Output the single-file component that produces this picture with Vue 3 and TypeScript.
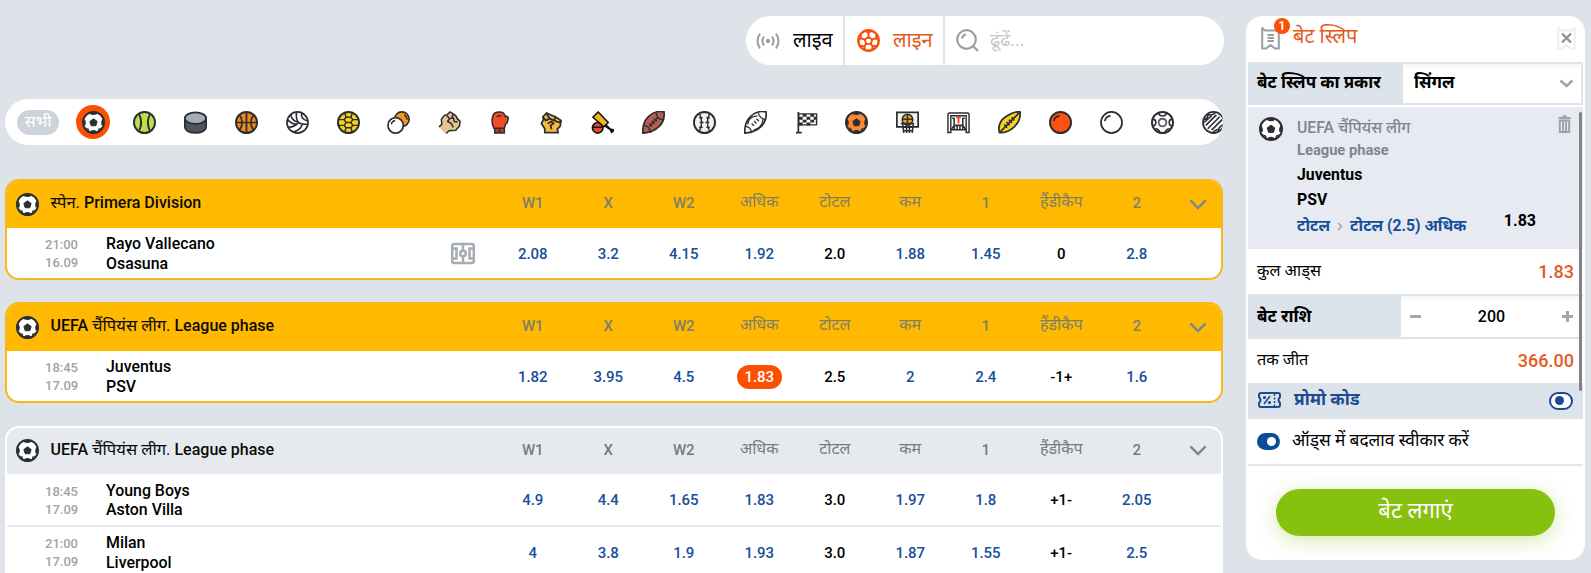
<script setup lang="ts">
interface Match {
  time: string
  date: string
  home: string
  away: string
  odds: string[]
  field?: boolean
  picked?: number
}
interface League {
  pre: string
  hi: string
  post: string
  gold: boolean
  matches: Match[]
}

const sports: string[] = [
  'tennis', 'puck', 'basket', 'volley', 'futsal', 'pingpong', 'fist', 'boxing', 'mma', 'cricket',
  'amfoot', 'baseball', 'rugby', 'flag', 'beach', 'hoop', 'goal', 'aussie', 'redball', 'whiteball', 'soccer2', 'hatch',
]
const columns: string[] = ['W1', 'X', 'W2', 'अधिक', 'टोटल', 'कम', '1', 'हैंडीकैप', '2']
const leagues: League[] = [
  {
    pre: '', hi: 'स्पेन.', post: ' Primera Division', gold: true,
    matches: [
      { time: '21:00', date: '16.09', home: 'Rayo Vallecano', away: 'Osasuna', field: true, odds: ['2.08', '3.2', '4.15', '1.92', '2.0', '1.88', '1.45', '0', '2.8'] },
    ],
  },
  {
    pre: 'UEFA ', hi: 'चैंपियंस लीग.', post: ' League phase', gold: true,
    matches: [
      { time: '18:45', date: '17.09', home: 'Juventus', away: 'PSV', picked: 3, odds: ['1.82', '3.95', '4.5', '1.83', '2.5', '2', '2.4', '-1+', '1.6'] },
    ],
  },
  {
    pre: 'UEFA ', hi: 'चैंपियंस लीग.', post: ' League phase', gold: false,
    matches: [
      { time: '18:45', date: '17.09', home: 'Young Boys', away: 'Aston Villa', odds: ['4.9', '4.4', '1.65', '1.83', '3.0', '1.97', '1.8', '+1-', '2.05'] },
      { time: '21:00', date: '17.09', home: 'Milan', away: 'Liverpool', odds: ['4', '3.8', '1.9', '1.93', '3.0', '1.87', '1.55', '+1-', '2.5'] },
    ],
  },
]
const isLatin = (s: string): boolean => /^[\x20-\x7e]+$/.test(s)
</script>

<template>
  <div class="page">
    <svg class="defs" width="0" height="0" aria-hidden="true">
      <symbol id="football" viewBox="0 0 24 24">
        <circle cx="12" cy="12" r="11" fill="#fff" stroke="#2b2e33" stroke-width="2" />
        <path d="M12 8.200l3.800 2.700-1.400 4.500H9.600l-1.400-4.500z" fill="#2b2e33" stroke="#2b2e33" stroke-linejoin="round" />
        <path d="M7 1.500Q8.500 4.200 12 4.200t5-2.700zM23 7Q18.800 10 20.500 15l2.500 0zM1 7Q5.200 10 3.500 15l-2.500 0zM8 22.800Q8.500 19.800 12 19.800t4 3zM3 17l4 1.500L8 22zM21 17l-4 1.500L16 22z" fill="#2b2e33" />
      </symbol>
      <symbol id="tennis" viewBox="0 0 24 24">
        <circle cx="12" cy="12" r="11" fill="#bede4a" stroke="#2b2e33" stroke-width="2" />
        <path d="M6 2.500Q11 12 6 21.500M18 2.500Q13 12 18 21.500" fill="none" stroke="#2b2e33" stroke-width="2" />
      </symbol>
      <symbol id="puck" viewBox="0 0 24 24">
        <path d="M.9 7.500v9C.9 25 23.100 25 23.100 16.500v-9z" fill="#4d555d" stroke="#2b2e33" stroke-width="1.800" />
        <ellipse cx="12" cy="7.500" rx="11.100" ry="6" fill="#a4adb7" stroke="#2b2e33" stroke-width="1.800" />
      </symbol>
      <symbol id="basket" viewBox="0 0 24 24">
        <circle cx="12" cy="12" r="11" fill="#ee871c" stroke="#2b2e33" stroke-width="2" />
        <path d="M12 1v22M1 12h22M4.500 4q6 8 0 16M19.500 4q-6 8 0 16" fill="none" stroke="#2b2e33" stroke-width="1.800" />
      </symbol>
      <symbol id="volley" viewBox="0 0 24 24">
        <circle cx="12" cy="12" r="11" fill="#fff" stroke="#2b2e33" stroke-width="1.800" />
        <path d="M11 1.500Q10 8 13 12q4 2.500 9.500 1.500M5 4q1 5.500 6.500 7.500M16.500 2q-2 6 6 8.500M13 12q-3 4.500-10.500 5M17 14q-2 6-10 8M1.500 9q4 4.500 9.500 5" fill="none" stroke="#2b2e33" stroke-width="1.700" />
      </symbol>
      <symbol id="futsal" viewBox="0 0 24 24">
        <circle cx="12" cy="12" r="11" fill="#f9d21b" stroke="#2b2e33" stroke-width="2" />
        <path d="M9.500 6.500h5L16.500 9l-2 3 2 3-2 2.500h-5L7.500 15l2-3-2-3zM9.500 12h5M9.500 6.500L8 2M14.500 6.500L16 2M9.500 17.500L8 22M14.500 17.500L16 22M1.500 9h6M16.500 9h6M1.500 15h6M16.500 15h6" fill="none" stroke="#2b2e33" stroke-width="1.500" />
      </symbol>
      <symbol id="pingpong" viewBox="0 0 24 24">
        <circle cx="15.500" cy="8.500" r="7.600" fill="#f59a1c" stroke="#2b2e33" stroke-width="1.800" />
        <path d="M18 4q3 2 3 5" fill="none" stroke="#2b2e33" stroke-width="1.500" />
        <circle cx="9" cy="15" r="8" fill="#fff" stroke="#2b2e33" stroke-width="1.800" />
        <path d="M4.500 14q.5-3.500 4-4" fill="none" stroke="#2b2e33" stroke-width="1.500" />
      </symbol>
      <symbol id="fist" viewBox="0 0 24 24">
        <path d="M1.500 17L4 13l-.3-5Q6 3.500 10 3l3-2 3 1.500 3 2L22 8l1 5-4 6-8 1-4 3.500z" fill="#e6c491" />
        <path d="M1 16.500L4 14 3.500 9Q6 4 9.500 4l3-3L16 3l2.500 2 2 3.500 2.500 2-.5 5-4 4.500-7 .5-3 3M9.500 5l2.500 3 4-1 1 4 3.500.5M16 3l-1.500 3.500M12 8l-2 3 4 2 2 4" fill="none" stroke="#2b2e33" stroke-width="1.600" />
      </symbol>
      <symbol id="boxing" viewBox="0 0 24 24">
        <path d="M6 17h10v6H6z" fill="#b5401d" stroke="#2b2e33" stroke-width="1.600" />
        <path d="M5 18Q2 12 4 5q1-4 7-4 5 0 6 5 3.500-1.500 3 2.500-.5 4-3 6l-1 3.500z" fill="#f14b23" stroke="#2b2e33" stroke-width="1.600" />
        <path d="M8 6q3-2 5-.5M11 19v4" fill="none" stroke="#2b2e33" stroke-width="1.500" />
      </symbol>
      <symbol id="mma" viewBox="0 0 24 24">
        <path d="M5 22.500v-4L1.500 13l2-4L3 6l4-4 4 2 5 2 6 4-1 6-3 3 1 3.500z" fill="#f9b93a" stroke="#2b2e33" stroke-width="1.800" stroke-linejoin="round" />
        <path d="M3 6l3 4 4-2-3-5M10 8l5 2 1-4M15 10l5 2 2-2M8 13l4-2 2 2-3 2 1 4" fill="none" stroke="#2b2e33" stroke-width="1.900" />
      </symbol>
      <symbol id="cricket" viewBox="0 0 24 24">
        <path d="M14 12l6.500 6 3.500 1v2.500l-3 2-1.500-3.500-7-5z" fill="#111" />
        <circle cx="7" cy="17.500" r="5.500" fill="#e54b20" stroke="#111" stroke-width="1.800" />
        <path d="M7.500 1L18 12l-4.500 4.500L2 6.500z" fill="#f2b41b" stroke="#111" stroke-width="1.600" />
        <path d="M1.500 17h11" fill="none" stroke="#111" stroke-width="1.700" />
      </symbol>
      <symbol id="amfoot" viewBox="0 0 24 24">
        <path d="M1 23Q0 12 7 5.500T23 1q1 9-5 15T1 23z" fill="#b85c50" stroke="#2b2e33" stroke-width="1.800" />
        <path d="M1 15q7 0 8 8M15 2q0 7 8 7M8 16l8-9M7.500 13l3 3M10 10.500l3 3M12.500 8l3 3" fill="none" stroke="#2b2e33" stroke-width="1.400" />
      </symbol>
      <symbol id="baseball" viewBox="0 0 24 24">
        <circle cx="12" cy="12" r="11" fill="#f5f1e8" stroke="#2b2e33" stroke-width="2" />
        <path d="M6.500 2.500q5 9.500 0 19M17.500 2.500q-5 9.500 0 19M6.500 7h3.500M7 12h4M6.500 17h3.500M14 7h3.500M13 12h4M14 17h3.500" fill="none" stroke="#2b2e33" stroke-width="1.500" />
      </symbol>
      <symbol id="rugby" viewBox="0 0 24 24">
        <path d="M1 23Q0 12 7 5.500T23 1q1 9-5 15T1 23z" fill="#fff" stroke="#2b2e33" stroke-width="1.800" />
        <path d="M1 16q6 0 7 7M15 2q1 6 8 7M10 20q9-2 10-12M4 14Q4 6 14 5" fill="none" stroke="#2b2e33" stroke-width="1.300" />
        <path d="M8 13l2.500 2.500M10.500 10.500l2.500 2.500M13 8l2.500 2.500" fill="none" stroke="#2b2e33" stroke-width="1.400" />
      </symbol>
      <symbol id="flag" viewBox="0 0 24 24">
        <path d="M3.500 1v22M1 22.500h6" stroke="#2b2e33" stroke-width="1.800" fill="none" />
        <path d="M4 3h18.500v11.500H4z" fill="#fff" stroke="#2b2e33" stroke-width="1.500" />
        <path d="M8 3h4v3H8zM16 3h4v3h-4zM4 6h4v3H4zM12 6h4v3h-4zM19.500 6h3v3h-3zM8 9h4v3H8zM16 9h4v3h-4zM4 12h4v3H4zM12 12h4v3h-4z" fill="#2b2e33" />
      </symbol>
      <symbol id="beach" viewBox="0 0 24 24">
        <circle cx="12" cy="12" r="11" fill="#f98834" stroke="#2b2e33" stroke-width="2" />
        <path d="M12 8.200l3.800 2.700-1.400 4.500H9.600l-1.400-4.500z" fill="#2b2e33" stroke="#2b2e33" stroke-linejoin="round" />
        <path d="M7 1.500Q8.500 4.200 12 4.200t5-2.700zM23 7Q18.800 10 20.500 15l2.500 0zM1 7Q5.200 10 3.500 15l-2.500 0zM8 22.800Q8.500 19.800 12 19.800t4 3zM3 17l4 1.500L8 22zM21 17l-4 1.500L16 22z" fill="#2b2e33" />
      </symbol>
      <symbol id="hoop" viewBox="0 0 24 24">
        <path d="M.9 1.500h22.200v15H.9z" fill="#f3f3f1" stroke="#2b2e33" stroke-width="1.800" />
        <circle cx="12" cy="9" r="5.500" fill="#f0a320" stroke="#2b2e33" stroke-width="1.600" />
        <path d="M12 3.500V12M6.500 8.500h11M5 13h14M7 13l1 10M11 13v10M14 13v10M18 13l-1 10M7 17h11M8 20.500h9" fill="none" stroke="#2b2e33" stroke-width="1.600" />
      </symbol>
      <symbol id="goal" viewBox="0 0 24 24">
        <path d="M1 22.500V3.500Q1 2 2.500 2h19Q23 2 23 3.500v19h-3V5H4v17.500z" fill="#fff" stroke="#2b2e33" stroke-width="1.500" />
        <path d="M7.500 7v12M16.500 7v12M7.500 15h9M4 20l3.500-5M20 20l-3.500-5M10.500 15v4M13.500 15v4M4 19.500h16M5.500 7.500h2M16.500 7.500h2" fill="none" stroke="#2b2e33" stroke-width="1.600" />
        <path d="M9.500 6.500h5M12 6.500v6.500" stroke="#e8442c" stroke-width="2" />
      </symbol>
      <symbol id="aussie" viewBox="0 0 24 24">
        <path d="M1.500 22.500Q-1 12 8 6T23 1q1 9-6 15.500T1.500 22.500z" fill="#f9d21b" stroke="#2b2e33" stroke-width="1.800" />
        <path d="M1.500 22.500L23 1M6.500 14l3 3.500M9 11.500l3 3.500M11.500 9l3 3.500M14 6.500l3 3.500" fill="none" stroke="#2b2e33" stroke-width="1.700" />
      </symbol>
      <symbol id="redball" viewBox="0 0 24 24">
        <circle cx="12" cy="12" r="11" fill="#fb5210" stroke="#2b2e33" stroke-width="2" />
        <path d="M5 10.500Q6 5.500 11 5" fill="none" stroke="#2b2e33" stroke-width="1.800" />
      </symbol>
      <symbol id="whiteball" viewBox="0 0 24 24">
        <circle cx="12" cy="12" r="11" fill="#fff" stroke="#2b2e33" stroke-width="1.800" />
        <path d="M5 10.500Q6 5.500 11 5" fill="none" stroke="#2b2e33" stroke-width="1.800" />
      </symbol>
      <symbol id="soccer2" viewBox="0 0 24 24">
        <circle cx="12" cy="12" r="11" fill="#fff" stroke="#2b2e33" stroke-width="2" />
        <circle cx="12" cy="12" r="4" fill="none" stroke="#5a6168" stroke-width="2" />
        <path d="M8 1.500q0 3.500 4 3.500t4-3.500M22.500 8.500q-3.500 0-3.500 3.500t3.500 3.500M1.500 8.500Q5 8.500 5 12t-3.500 3.500M9 22.500q-.5-4-4.500-4M15 22.500q.5-4 4.500-4" fill="none" stroke="#2b2e33" stroke-width="1.700" />
      </symbol>
      <symbol id="hatch" viewBox="0 0 24 24">
        <circle cx="12" cy="12" r="11" fill="#fff" stroke="#2b2e33" stroke-width="1.800" />
        <path d="M6 3q1 5-4.500 6M6 3q4 3 8-1.500M18 21q-2-4-7 2M18 21q-2-4 5-7M4 15L15 4M6 18.500L18.500 6M10 20L21 9M2 12l8-7" fill="none" stroke="#2b2e33" stroke-width="1.700" />
      </symbol>
    </svg>

    <main class="board">
      <nav class="modes">
        <div class="mode live">
          <svg width="24" height="18" viewBox="0 0 24 18" fill="none" stroke="#9b9ea3" stroke-width="2">
            <circle cx="12" cy="9" r="2.200" fill="#9b9ea3" stroke="none" />
            <path d="M8 4.500q-3 4.500 0 9M4 1.500q-5 7.500 0 15M16 4.500q3 4.500 0 9M20 1.500q5 7.500 0 15" />
          </svg>
          <span>लाइव</span>
        </div>
        <div class="mode line">
          <svg width="23" height="23" viewBox="0 0 24 24" fill="none" stroke="#f4510b" stroke-width="2">
            <circle cx="12" cy="12" r="10.700" fill="#fff" stroke-width="2.400" />
            <path d="M12 8.300l3.800 2.700-1.400 4.500H9.600L8.200 11z" />
            <path d="M12 8.300V5M15.800 11l4.200-1.200M14.400 15.500l2 2.700M9.600 15.500l-2 2.700M8.200 11L4 9.800M16.400 18.200l4-.7M7.600 18.200l-4-.7M16.400 18.200l-.9 3.800M7.600 18.200l.9 3.800M4 9.800L1.500 12M20 9.800l2.500 2.200M4 9.800V6M20 9.800V6" />
            <path d="M8 1.800h8L12 5.800z" fill="#f4510b" stroke="none" />
          </svg>
          <span>लाइन</span>
        </div>
        <div class="mode search">
          <svg width="23" height="23" viewBox="0 0 23 23" fill="none" stroke="#9b9ea3" stroke-width="2.200">
            <circle cx="10.500" cy="10.500" r="9.300" />
            <path d="M17 17l5 5M6 9.500q.5-3.500 4-4" />
          </svg>
          <span>ढूंढें...</span>
        </div>
      </nav>

      <div class="sports">
        <span class="all"><span>सभी</span></span>
        <span class="active"><svg width="23" height="23"><use href="#football" /></svg></span>
        <span v-for="s in sports" :key="s" class="sport"><svg width="23" height="23"><use :href="'#' + s" /></svg></span>
      </div>

      <section v-for="(l, i) in leagues" :key="i" class="league" :class="{ gold: l.gold }">
        <header class="grid head">
          <svg class="ball" width="23" height="23"><use href="#football" /></svg>
          <span class="title">{{ l.pre }}<i>{{ l.hi }}</i>{{ l.post }}</span>
          <span v-for="c in columns" :key="c" class="cell" :class="{ latin: isLatin(c) }">{{ c }}</span>
          <svg class="chev" width="18" height="11" viewBox="0 0 19 11" fill="none" stroke-width="2.600"><path d="M1.500 1.200l8 8 8-8" /></svg>
        </header>
        <div v-for="m in l.matches" :key="m.home" class="grid match">
          <div class="when"><span>{{ m.time }}</span><span>{{ m.date }}</span></div>
          <div class="teams"><span>{{ m.home }}</span><span>{{ m.away }}</span></div>
          <div class="pitch">
            <svg v-if="m.field" width="24" height="21" viewBox="0 0 24 21" fill="none" stroke="#a7acb2" stroke-width="2.500">
              <rect x="1.200" y="1" width="21.600" height="19" rx="2" />
              <path d="M12 1v6M12 14v6M1 5.500h4.500v10H1M23 5.500h-4.500v10H23" /><circle cx="12" cy="10.500" r="2.800" />
            </svg>
          </div>
          <span v-for="(o, k) in m.odds" :key="k" class="cell" :class="{ plain: k === 4 || k === 7, picked: m.picked === k }"><b>{{ o }}</b></span>
        </div>
      </section>
    </main>

    <aside class="slip">
      <header class="slip-head">
        <span class="ticket">
          <svg width="19" height="24" viewBox="0 0 19 24" fill="none" stroke="#9b9ea3" stroke-width="2">
            <path d="M1.200 1.500Q3 5 6 4.500h7Q16 5 17.800 1.500V22.500H14l-4.500-3.500L5 22.500H1.200zM6.500 9h6.500M6.500 12h6.500M6.500 15h6.500" />
          </svg>
          <em>1</em>
        </span>
        <span class="name">बेट स्लिप</span>
        <svg class="close" width="19" height="24" viewBox="0 0 19 24" fill="none" stroke="#eceef0" stroke-width="2">
          <path d="M1.200 1.500Q3 5 6 4.500h7Q16 5 17.800 1.500V22.500H14l-4.500-3.500L5 22.500H1.200z" />
          <path d="M5 7.500l9 9M14 7.500l-9 9" stroke="#8d9196" stroke-width="2.300" />
        </svg>
      </header>

      <div class="slip-body">
        <div class="type">
          <span class="label">बेट स्लिप का प्रकार</span>
          <span class="select"><span>सिंगल</span>
            <svg width="15" height="9" viewBox="0 0 15 9" fill="none" stroke="#a4a7aa" stroke-width="2.600"><path d="M1.500 1.500l6 5.500 6-5.500" /></svg>
          </span>
        </div>

        <div class="pick">
          <svg class="pball" width="24" height="24"><use href="#football" /></svg>
          <div class="info">
            <span class="lg">UEFA चैंपियंस लीग</span>
            <span class="ph">League phase</span>
            <span class="tm">Juventus</span>
            <span class="tm">PSV</span>
            <span class="mk"><span>टोटल</span><svg width="6" height="9" viewBox="0 0 6 9" fill="none" stroke="#a9adb3" stroke-width="1.800"><path d="M1 .8l3.500 3.700L1 8.200" /></svg><span>टोटल (2.5) अधिक</span></span>
          </div>
          <div class="side">
            <svg width="13" height="18" viewBox="0 0 12 18" fill="none" stroke="#9da2a9" stroke-width="1.900">
              <path d="M0 3h12M4 1.200h4M1.300 5.500h9.400V17H1.300zM4.500 6v10M7.500 6v10" />
            </svg>
            <span class="price">1.83</span>
          </div>
        </div>

        <div class="sum total"><span>कुल आड्स</span><strong>1.83</strong></div>
        <div class="stake">
          <span class="label">बेट राशि</span>
          <span class="stepper"><i class="minus"></i><b>200</b><i class="plus"></i></span>
        </div>
        <div class="sum win"><span>तक जीत</span><strong>366.00</strong></div>
        <div class="promo">
          <svg width="23" height="16" viewBox="0 0 23 16" fill="none" stroke="#1c4a94" stroke-width="2">
            <path d="M3 1h17q2 0 2 2v2q-3 3 0 6v2q0 2-2 2H3q-2 0-2-2v-2q3-3 0-6V3q0-2 2-2z" />
            <path d="M12 4l-6 8" stroke-width="1.600" /><path d="M16.500 2v12" stroke-width="1.500" stroke-dasharray="2 1.500" />
            <circle cx="6.500" cy="5.500" r=".8" stroke-width="1.600" /><circle cx="11.500" cy="10.500" r=".8" stroke-width="1.600" />
          </svg>
          <span>प्रोमो कोड</span>
          <i class="toggle off"></i>
        </div>
        <div class="accept"><i class="toggle on"></i><span>ऑड्स में बदलाव स्वीकार करें</span></div>
        <span class="bar"></span>
      </div>
      <div class="foot"><button type="button">बेट लगाएं</button></div>
    </aside>
  </div>
</template>

<style>
html, body { margin: 0; background: #dde3e9; overflow: hidden; }
</style>

<style scoped>
.page { box-sizing: border-box; width: 1591px; height: 573px; overflow: hidden; background: #dde3e9; display: flex; align-items: flex-start; font-family: Roboto, "Noto Sans", sans-serif; color: #000; padding-left: 5px; gap: 23px; }
.page *, .page *::before { box-sizing: border-box; }
.defs { position: absolute; }
svg { display: block; flex: none; overflow: visible; }
.defs { overflow: hidden; }
.board { width: 1218px; flex: none; padding-top: 16px; display: flex; flex-direction: column; }
.modes { width: 478px; height: 49px; align-self: flex-end; margin-right: -1px; border-radius: 25px; display: flex; gap: 2px; overflow: hidden; flex: none; }
.mode { background: #fff; display: flex; align-items: center; font-size: 20px; }
.mode span { margin-top: -2px; }
.live { width: 97px; padding-left: 10px; gap: 13px; }
.line { width: 98px; padding-left: 12px; gap: 13px; color: #e5591c; }
.search { flex: 1; padding-left: 11px; gap: 11px; color: #c4c6c9; font-size: 18px; }
.search span { margin-top: -4px; }
.sports { margin-top: 34px; height: 46px; flex: none; background: #fff; border-radius: 23px; display: flex; align-items: center; overflow: hidden; padding-left: 12px; }
.all { width: 42px; height: 25px; border-radius: 13px; background: #ccd3db; color: #fff; font-size: 16.500px; display: flex; align-items: center; justify-content: center; flex: none; margin-right: 17px; }
.all span { margin-top: -3px; }
.active { width: 34px; height: 34px; border-radius: 50%; background: #fb4f04; display: flex; align-items: center; justify-content: center; flex: none; margin-right: 9px; }
.sport { width: 50.900px; flex: none; display: flex; justify-content: center; }
.league { flex: none; margin-top: 23px; border: 2px solid #fff; border-radius: 14px; background: #fff; overflow: hidden; }
.league:last-child { padding-bottom: 30px; }
.league.gold { border-color: #f6b91b; }
.sports + .league { margin-top: 34px; }
.sports + .league + .league { margin-top: 22px; }
.grid { display: grid; align-items: center; }
.head { grid-template-columns: 43.500px 444.500px repeat(9, 75.500px) 1fr; height: 46px; background: #e6eaef; color: #727d87; }
.gold .head { background: #ffb900; height: 47px; color: #7f8064; }
.ball { margin-left: 9px; margin-top: -1px; }
.title { color: #0a0a0a; font-weight: 500; font-size: 16px; white-space: nowrap; line-height: 20px; margin-top: -3px; }
.title i { font-style: normal; font-weight: 400; font-size: 16.600px; }
.cell { text-align: center; font-weight: 500; font-size: 15px; }
.head .cell { font-weight: 400; font-size: 16px; line-height: 20px; margin-top: -5px; }
.head .cell.latin { font-weight: 500; font-size: 15px; margin-top: -3px; }
.chev { stroke: #7c8791; margin-left: 14px; margin-top: -1px; }
.match { grid-template-columns: 99px 342px 47px repeat(9, 75.500px) 1fr; height: 50px; }
.match > * { margin-top: 1px; }
.match + .match { border-top: 2px solid #e6e9ed; height: 54px; margin: 0 -2px; padding: 0 2px; }
.match + .match > * { margin-top: -1px; }
.league:not(.gold) .match:nth-child(2) { height: 51px; }
.when { display: flex; flex-direction: column; font-size: 13px; line-height: 18px; color: #9fa3a8; font-weight: 500; padding-left: 38px; padding-top: 1px; }
.teams { display: flex; flex-direction: column; font-size: 15.900px; line-height: 19.500px; font-weight: 500; }
.pitch { padding-left: 3px; }
.match .cell { color: #16509a; }
.cell b { font-weight: 500; }
.match .plain { color: #000; }
.match .picked b { display: inline-block; color: #fff; background: #fb4f04; width: 45px; height: 24px; line-height: 24px; border-radius: 12px; }
.slip { width: 339px; height: 544px; margin-top: 16px; background: #fff; border-radius: 16px; flex: none; display: flex; flex-direction: column; padding: 0 2px; }
.slip-head { height: 46px; display: flex; align-items: center; color: #e5591c; font-size: 20px; padding: 0 7px 2px 13px; }
.name { margin-top: -5px; }
.ticket { position: relative; margin-right: 13px; }
.ticket em { position: absolute; left: 13px; top: -8px; width: 16px; height: 16px; border-radius: 50%; background: #fb4f04; color: #fff; font: 700 12px/16px Roboto, sans-serif; text-align: center; }
.close { margin-left: auto; }
.slip-body { position: relative; display: flex; flex-direction: column; }
.type, .stake { display: flex; background: #dde3ea; font-weight: 700; font-size: 17px; }
.type { height: 43px; padding: 2px 2px 2px 0; margin-bottom: 2px; }
.type .label { padding-bottom: 4px; }
.stake .label { padding-bottom: 3px; }
.select > span { padding-bottom: 4px; }
.label { width: 155px; padding-left: 9px; align-self: center; white-space: nowrap; }
.select { flex: 1; background: linear-gradient(#f4f5f7, #fff 6px); display: flex; align-items: center; justify-content: space-between; padding: 0 7px 0 11px; }
.pick { height: 142px; background: #e7eaf0; display: flex; padding: 11px 12px 0 11px; }
.pball { margin-top: -1px; }
.info { display: flex; flex-direction: column; margin-left: 14px; font-weight: 700; font-size: 15px; color: #7c8791; white-space: nowrap; }
.lg { line-height: 22px; margin-top: -1px; margin-bottom: 1px; font-size: 15.800px; font-weight: 500; }
.ph { line-height: 20px; font-size: 14.700px; }
.tm { line-height: 25px; font-size: 15.800px; color: #000; position: relative; top: 2px; }
.mk { line-height: 28px; color: #16509a; display: flex; align-items: center; gap: 7px; font-size: 15.700px; padding-top: 2px; }
.side { margin-left: auto; display: flex; flex-direction: column; align-items: flex-end; margin-top: -3px; }
.price { font-weight: 700; font-size: 16px; margin: 78px 35px 0 0; }
.sum { height: 45px; display: flex; align-items: center; justify-content: space-between; padding: 0 9px; font-size: 16.300px; }
.sum > span { margin-top: -3px; }
.sum strong { font-weight: 500; font-size: 18px; color: #e5591c; }
.stake { height: 45px; padding: 2px 0; }
.stepper { width: 182px; background: linear-gradient(#f4f5f7, #fff 6px); margin-left: -2px; display: flex; align-items: center; justify-content: space-between; padding: 0 10px 0 9px; font-size: 16px; }
.stepper b { font-weight: 500; font-size: 16px; }
.minus, .plus { display: block; width: 11px; height: 3px; background: #a4a7aa; position: relative; }
.plus::before { content: ""; position: absolute; left: 4px; top: -4px; width: 3px; height: 11px; background: #a4a7aa; }
.win { height: 44px; padding-bottom: 1px; }
.promo { height: 36px; background: #dde3ea; display: flex; align-items: center; padding: 0 10px; color: #1c4a94; font-weight: 700; font-size: 17.300px; gap: 13px; }
.promo svg { margin-top: -2px; }
.promo > span { margin-top: -5px; }
.toggle { display: block; width: 24px; height: 18px; border-radius: 9px; position: relative; }
.toggle::before { content: ""; position: absolute; width: 9px; height: 9px; border-radius: 50%; }
.off { margin-left: auto; margin-top: -1px; border: 2px solid #1c4a94; background: #fff; }
.off::before { left: 4px; top: 2.500px; background: #1c4a94; }
.on { width: 23px; height: 17px; background: #0a4c9a; }
.on::before { right: 4px; top: 4px; background: #fff; }
.accept { height: 47px; border-bottom: 2px solid #e4e7ea; display: flex; align-items: center; padding-left: 9px; gap: 12px; font-size: 17.300px; white-space: nowrap; }
.accept span { margin-top: -4px; }
.bar { position: absolute; right: 1px; top: 50px; width: 3px; height: 279px; background: #808388; border-radius: 2px; }
.foot { padding: 23px 28px 0; }
button { display: block; width: 279px; height: 47px; border: 0; border-radius: 24px; background: #87c110; color: #fff; font: 400 22px Roboto, "Noto Sans", sans-serif; box-shadow: 0 4px 20px rgba(135, 193, 16, .35); padding: 0 0 7px; }
</style>
